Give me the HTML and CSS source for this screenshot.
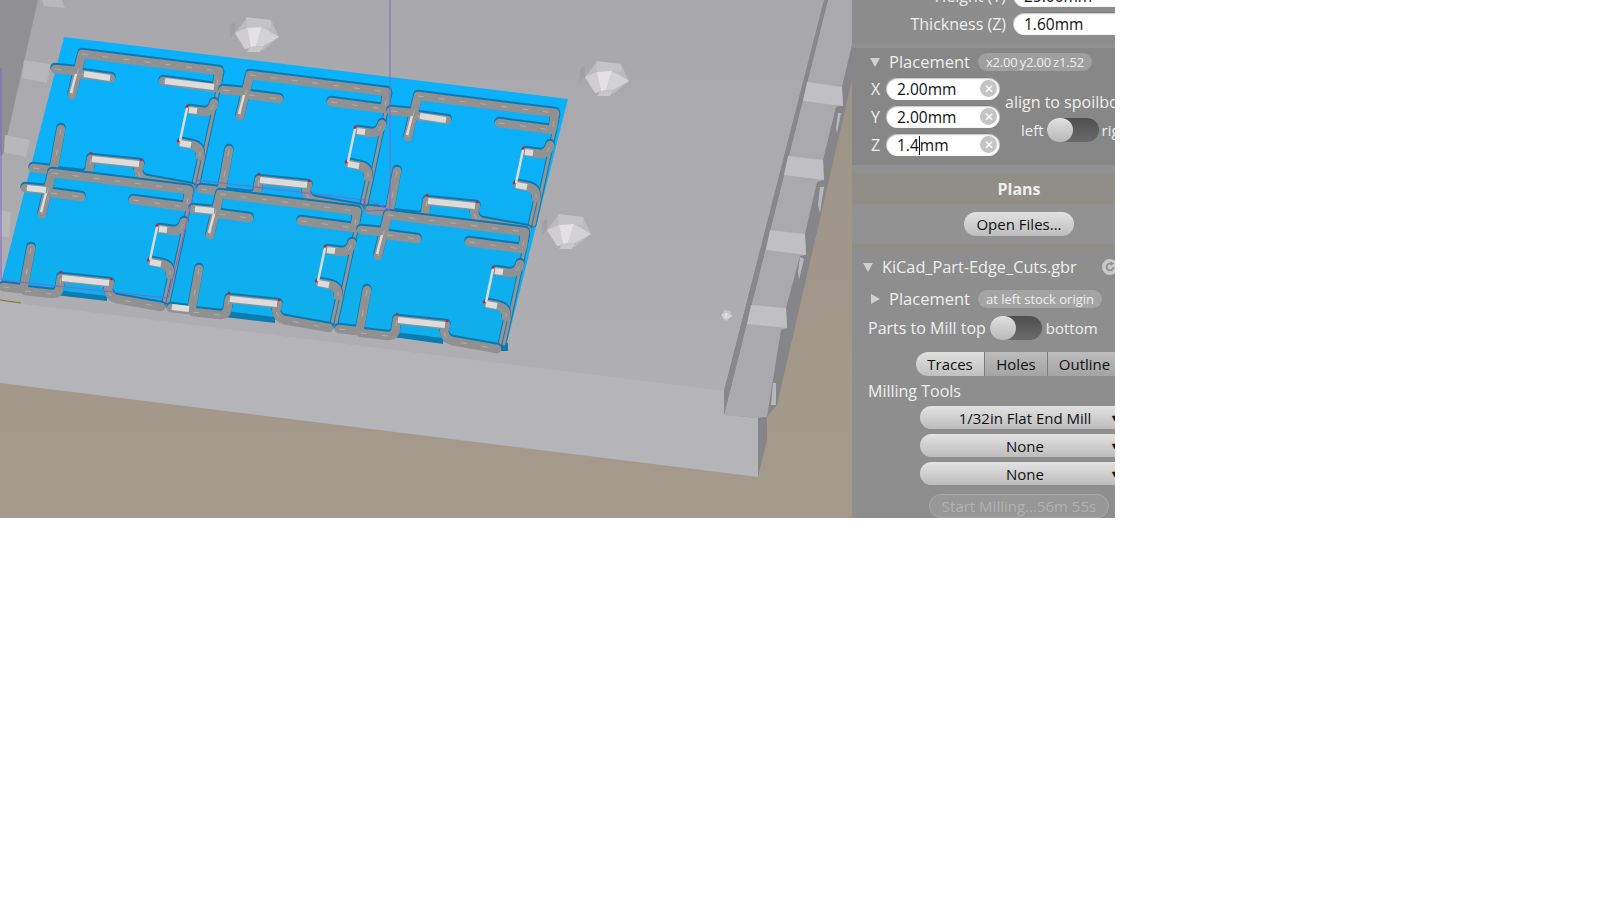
FILE: index.html
```html
<!DOCTYPE html>
<html lang="en">
  <head>
    <meta charset="UTF-8" />
    <title>Bantam Tools Milling Machine</title>
    <link rel="stylesheet" href="styles.css">
  </head>
  <body>
    <div class="app">
      <svg class="scene" viewBox="0 0 852 518" width="852" height="518">
        <defs>
          <linearGradient id="ground" x1="0" y1="0" x2="0" y2="1">
            <stop offset="0" stop-color="#9b9388" />
            <stop offset="1" stop-color="#a59b8c" />
          </linearGradient>
          <linearGradient id="bed" x1="0" y1="0" x2="0" y2="1">
            <stop offset="0" stop-color="#a8a7ab" />
            <stop offset="1" stop-color="#b0afb4" />
          </linearGradient>
          <linearGradient id="copper" x1="0" y1="0" x2="0" y2="1">
            <stop offset="0" stop-color="#09b2ff" />
            <stop offset="1" stop-color="#10aeea" />
          </linearGradient>

          <g id="cone">
            <polygon class="cone-side" points="0,8 5,5 5,16 0,21" />
            <polygon class="cone-base" points="5,16 16,2 41,3 49,20 33,33 15,32" />
            <polygon class="cone-top" points="16,0 41,3 41,11 32,10 17,11" />
            <polygon class="cone-left" points="5,16 17,11 21,30 15,32" />
            <polygon class="cone-mid" points="17,11 32,10 26,29 21,30" />
            <polygon class="cone-right" points="32,10 49,20 33,29 26,29" />
            <polygon class="cone-low" points="21,30 33,29 30,35 17,35" />
          </g>

          <g id="wide-cuts">
            <path d="M72 95 L82 54 L219 71 L217 85" />
            <path d="M55 69 L76 71" />
            <path d="M81 74 L111 78" />
            <path d="M163 81 L216 88" />
            <path d="M190 110 L204 112 Q212 112 214 103" />
            <path d="M182 143 L192 145 Q201 147 200 156" />
            <path d="M61 129 L54 167" />
            <path d="M33 168 L50 170" />
            <path d="M55 172 L82 175 Q90 175 90 165 L91 159 L140 164 L138 170 Q139 178 146 180 L191 188" />
          </g>
          <g id="thin-cuts">
            <path d="M222 72 L198 183" />
            <path d="M200 156 L194 183" />
          </g>
          <g id="bright-cuts">
            <path class="bright-wide" d="M92 159 L139 164" />
            <path class="bright-wide" d="M180 143 L191 145" />
            <path class="bright-wide" d="M189 110 L197 111" />
            <path class="bright-thin" d="M187 108 L180 141" />
            <path class="bright-thin" d="M76 74 L71 93" />
          </g>

          <g id="tile">
            <use href="#thin-cuts" class="thin-edge" />
            <use href="#thin-cuts" class="thin-cut" />
            <use href="#wide-cuts" class="cut-edge" transform="translate(0 -1.5)" />
            <use href="#wide-cuts" class="cut" />
            <use href="#wide-cuts" class="cut-fleck" />
            <use href="#bright-cuts" />
            <circle class="tack" cx="91" cy="153" r="1.3" />
            <circle class="tack" cx="141" cy="160" r="1.3" />
            <circle class="tack" cx="187" cy="106" r="1.3" />
            <circle class="tack" cx="178" cy="141" r="1.3" />
          </g>
        </defs>

        <rect width="852" height="518" fill="url(#ground)" />

        <!-- machine bed -->
        <polygon class="bed-shadow" points="0,0 38,0 3,155 0,155" />
        <polygon fill="url(#bed)" points="38,0 824,0 724,391 724,415 0,301 0,155 3,155" />
        <polygon class="bed-front" points="0,301 724,391 724,415 758,418 758,477 0,383" />
        <polygon class="bed-step" points="724,415 828,0 852,0 852,45 767,417 758,418" />
        <polygon class="bed-groove" points="724,391 824,0 828,0 724,415" />
        <polygon class="bed-dark" points="852,45 842,87 843,106 836,107 823,160 824,180 817,182 805,234 806,255 800,256 786,308 787,328 781,330 767,417 758,418 758,477 767,440 767,417 777,405 852,80" />
        <polygon class="tooth" points="807,82 842,87 843,106 803,101" />
        <polygon class="tooth" points="788,156 823,160 824,180 784,175" />
        <polygon class="tooth" points="770,230 805,234 806,255 766,250" />
        <polygon class="tooth" points="751,305 786,308 787,328 747,324" />
        <polygon class="tooth-soft" points="838,113 841,113 837,133 836,128" />
        <polygon class="tooth-soft" points="820,187 824,187 820,213 818,205" />
        <polygon class="tooth-soft" points="800,257 804,259 799,280 798,272" />
        <polygon class="tooth-soft" points="773,383 776,383 776,405 771,405" />
        <polygon class="tooth-soft" points="42,0 62,0 65,8 44,6" />
        <polygon class="tooth-soft" points="24,60 50,64 47,83 22,78" />
        <polygon class="tooth-soft" points="5,135 30,140 26,157 4,152" />
        <polygon class="tooth-soft" points="0,210 11,212 9,237 0,236" />

        <use href="#cone" transform="translate(230 17)" />
        <use href="#cone" transform="translate(580 61)" />
        <use href="#cone" transform="translate(542 214)" />
        <use href="#cone" transform="translate(720 310) scale(0.25 0.3)" />

        <!-- stock with the milled parts -->
        <polygon fill="url(#copper)" points="64,37 568,99 505,350 1,283" />
        <rect class="board-edge" x="501" y="343" width="7" height="8" />
        <polygon class="board-edge" points="57,290 107,296 107,301 55,295" />
        <polygon class="board-edge" points="226,311 275,317 275,323 224,317" />
        <polygon class="board-edge" points="395,332 443,338 443,344 393,337" />

        <use href="#tile" />
        <use href="#tile" transform="translate(168 21)" />
        <use href="#tile" transform="translate(336 42)" />
        <use href="#tile" transform="translate(-30 119)" />
        <use href="#tile" transform="translate(138 140)" />
        <use href="#tile" transform="translate(306 161)" />

        <!-- tabs that were milled through on some parts only -->
        <path class="bright-wide" d="M84 74 L110 78" />
        <path class="bright-wide" d="M165 81 L214 87" />
        <path class="bright-wide" d="M420 116 L446 120" />
        <path class="bright-wide" d="M27 188 L46 190" />
        <path class="bright-wide" d="M195 209 L214 211" />
        <path class="bright-wide" d="M172 307 L189 309" />

        <!-- tool path -->
        <path class="tool-path" d="M1 68 V280 L168 298 L197 180 L365 200 L366 211 L390 210 V0 M369 200 L390 210" />
        <path class="axis" d="M0 300 L21 303" />
      </svg>

      <div class="panel">
        <div class="group">
          <div class="section stock">
            <div class="size-row">
              <span class="size-label">Height (Y)</span>
              <span class="field size-field">25.00mm</span>
            </div>
            <div class="size-row">
              <span class="size-label">Thickness (Z)</span>
              <span class="field size-field">1.60mm</span>
            </div>
          </div>
          <div class="section placement">
            <div class="disclosure">
              <span class="tri tri-down"></span>
              <span>Placement</span>
              <span class="badge badge-tight">x2.00 y2.00 z1.52</span>
            </div>
            <div class="placement-body">
              <div class="axes">
                <div class="axis-row">
                  <span class="axis-label">X</span>
                  <span class="field axis-field"><span>2.00mm</span><span class="clear">✕</span></span>
                </div>
                <div class="axis-row">
                  <span class="axis-label">Y</span>
                  <span class="field axis-field"><span>2.00mm</span><span class="clear">✕</span></span>
                </div>
                <div class="axis-row">
                  <span class="axis-label">Z</span>
                  <span class="field axis-field"><span>1.4<span class="caret"></span>mm</span><span class="clear">✕</span></span>
                </div>
              </div>
              <div class="align">
                <div class="align-title">align to spoilboard</div>
                <div class="switch-row align-switch">
                  <span>left</span>
                  <span class="switch"><span class="knob"></span></span>
                  <span>right</span>
                </div>
              </div>
            </div>
          </div>
        </div>

        <h2 class="plans-title">Plans</h2>
        <div class="section open-files">
          <button class="btn">Open Files...</button>
        </div>

        <div class="section plan">
          <div class="plan-head">
            <span class="tri tri-down"></span>
            <span>KiCad_Part-Edge_Cuts.gbr</span>
            <svg class="reload" viewBox="0 0 16 16" width="16" height="16">
              <circle cx="8" cy="8" r="8" fill="#c9c9c9" />
              <path d="M11.5 8 A3.5 3.5 0 1 1 9.5 4.8" fill="none" stroke="#8e8e8e" stroke-width="1.8" />
              <path d="M8.5 2.6 L12 4.6 L8.6 7 Z" fill="#8e8e8e" />
            </svg>
          </div>
          <div class="disclosure plan-placement">
            <span class="tri tri-right"></span>
            <span>Placement</span>
            <span class="badge">at left stock origin</span>
          </div>
          <div class="switch-row parts-row">
            <span class="parts-label">Parts to Mill top</span>
            <span class="switch"><span class="knob"></span></span>
            <span>bottom</span>
          </div>
          <div class="tabs">
            <button class="tab tab-on">Traces</button>
            <button class="tab">Holes</button>
            <button class="tab">Outline</button>
          </div>
          <div class="tools-title">Milling Tools</div>
          <div class="tools">
            <div class="tool"><span class="tool-name">1/32in Flat End Mill</span><span class="tool-arrow">▼</span></div>
            <div class="tool"><span class="tool-name">None</span><span class="tool-arrow">▼</span></div>
            <div class="tool"><span class="tool-name">None</span><span class="tool-arrow">▼</span></div>
          </div>
          <button class="btn start">Start Milling...56m 55s</button>
        </div>
      </div>
    </div>
  </body>
</html>
```

FILE: styles.css
```css
body {
  margin: 0;
  background-color: white;
  font-family: "Open Sans", sans-serif;
  font-size: 16px;
}

.app {
  display: flex;
  width: 1115px;
  height: 518px;
  overflow: hidden;
}

.scene {
  display: block;
  flex-shrink: 0;
}

/* scene colours */
.bed-shadow { fill: #909092; }
.bed-front { fill: #b5b4b9; }
.bed-step { fill: #aaa9ad; }
.bed-groove { fill: #88878c; }
.bed-dark { fill: #86858a; }
.tooth { fill: #c0bfc3; }
.tooth-soft { fill: #b8b7bb; }

.cone-side { fill: #a1a1a4; }
.cone-base { fill: #bcbbbf; }
.cone-top { fill: #c4c3c7; }
.cone-left { fill: #d0ced1; }
.cone-mid { fill: #e3e1e3; }
.cone-right { fill: #d2d1d4; }
.cone-low { fill: #c8c7cb; }

.board-edge { fill: #0a7cb0; }

.cut,
.cut-edge,
.cut-fleck,
.thin-cut,
.thin-edge {
  fill: none;
  stroke-linecap: round;
  stroke-linejoin: round;
}

.cut { stroke: #919192; stroke-width: 8.5; }
.cut-edge { stroke: #0a79b2; stroke-width: 9.5; }
.cut-fleck { stroke: #aeaeaf; stroke-width: 1; stroke-dasharray: 6 15; stroke-linecap: butt; }
.thin-cut { stroke: #939394; stroke-width: 3; }
.thin-edge { stroke: #0a79b2; stroke-width: 5; }

.bright-wide,
.bright-thin {
  fill: none;
  stroke: #dcdcdc;
}

.bright-wide { stroke-width: 6; }
.bright-thin { stroke-width: 2.5; }

.tack { fill: #f01020; }

.tool-path {
  fill: none;
  stroke: #7d68c8;
  stroke-width: 1;
}

.axis {
  fill: none;
  stroke: #77781f;
  stroke-width: 1;
}

/* side panel */
.panel {
  display: flex;
  flex-direction: column;
  flex-shrink: 0;
  width: 334px;
  margin-top: -21px;
  color: #eeeeee;
  background-color: #918d87;
}

.group {
  padding-bottom: 9px;
  background-color: #919191;
  border-radius: 0 0 8px 8px;
}

.section {
  background-color: #929292;
}

.stock {
  display: flex;
  flex-direction: column;
  gap: 5px;
  padding: 5px 0 9px;
  margin-bottom: 4px;
  background-color: #8d8d8e;
}

.size-row {
  display: flex;
  justify-content: flex-end;
  align-items: center;
  gap: 7px;
  height: 23px;
  padding-right: 13px;
}

.field {
  box-sizing: border-box;
  display: flex;
  align-items: center;
  height: 23px;
  padding-left: 11px;
  font-size: 15.5px;
  color: #111;
  background-color: white;
  border-radius: 12px;
  box-shadow: inset 0 1px 2px #555;
}

.size-field {
  width: 160px;
}

.placement {
  padding: 2px 0 9px 18px;
  background-color: #878787;
}

.disclosure {
  display: flex;
  align-items: center;
  height: 24px;
  line-height: 24px;
  margin-bottom: 3px;
  font-size: 16.5px;
}

.tri {
  width: 0;
  height: 0;
  margin-right: 9px;
}

.tri-down {
  border-left: 5px solid transparent;
  border-right: 5px solid transparent;
  border-top: 9px solid #cfcfcf;
}

.tri-right {
  border-top: 5px solid transparent;
  border-bottom: 5px solid transparent;
  border-left: 9px solid #cfcfcf;
}

.badge {
  margin-left: 8px;
  padding: 0 8px;
  height: 18px;
  line-height: 18px;
  font-size: 13px;
  background-color: rgba(255, 255, 255, 0.2);
  border-radius: 9px;
  white-space: nowrap;
}

.badge-tight {
  word-spacing: -1px;
  letter-spacing: -0.2px;
}

.placement-body {
  display: flex;
  gap: 5px;
}

.axes {
  display: flex;
  flex-direction: column;
  gap: 5px;
}

.axis-row {
  display: flex;
  align-items: center;
}

.axis-label {
  box-sizing: border-box;
  width: 16px;
  padding-left: 1px;
}

.axis-field {
  justify-content: space-between;
  width: 114px;
  padding-right: 3px;
}

.clear {
  width: 17px;
  height: 17px;
  line-height: 17px;
  font-size: 12px;
  text-align: center;
  color: white;
  background-color: #c4c4c4;
  border-radius: 50%;
}

.caret {
  display: inline-block;
  width: 1px;
  height: 19px;
  margin-bottom: -4px;
  background-color: #111;
}

.align {
  padding-top: 14px;
  white-space: nowrap;
}

.align-title {
  line-height: 22px;
}

.switch-row {
  display: flex;
  align-items: center;
  gap: 4px;
  height: 24px;
  margin: 5px 0 0 16px;
  font-size: 15px;
  white-space: nowrap;
}

.align-switch {
  gap: 3px;
}

.parts-label {
  font-size: 16px;
}

.switch {
  display: block;
  flex-shrink: 0;
  width: 52px;
  height: 24px;
  background: linear-gradient(#4f4f4f, #6a6a6a);
  border-radius: 12px;
}

.knob {
  display: block;
  width: 26px;
  height: 24px;
  background: linear-gradient(#e0e0e0, #b8b8b8);
  border-radius: 12px;
}

.plans-title {
  margin: 0;
  height: 30px;
  line-height: 30px;
  font-size: 16px;
  font-weight: 700;
  text-align: center;
}

.btn {
  display: block;
  height: 24px;
  padding: 0 12px;
  font-family: inherit;
  font-size: 15px;
  line-height: 22px;
  color: #111;
  background: linear-gradient(#e2e2e2, #bdbdbd);
  border: none;
  border-radius: 12px;
}

.open-files {
  display: flex;
  justify-content: center;
  padding: 8px 0;
  margin-bottom: 4px;
  border-radius: 8px;
}

.plan {
  flex: 1;
  padding-top: 7px;
  background-color: #8e8e8e;
  border-radius: 8px 8px 0 0;
}

.plan-head {
  display: flex;
  align-items: center;
  height: 24px;
  padding-left: 11px;
  font-size: 16.3px;
}

.plan-head .tri {
  margin-right: 9px;
}

.reload {
  margin-left: auto;
  margin-right: 68px;
}

.plan-placement {
  margin: 8px 0 5px 19px;
}

.parts-row {
  margin: 0 0 0 16px;
}

.tabs {
  display: flex;
  height: 24px;
  margin: 12px 0 0 64px;
}

.tab {
  padding: 0;
  width: 63px;
  font-family: inherit;
  font-size: 15px;
  color: #111;
  background: linear-gradient(#bcbcbc, #a4a4a4);
  border: none;
  border-left: 1px solid #7c7c7c;
}

.tab:last-child {
  width: 90px;
  padding-right: 16px;
  border-radius: 0 12px 12px 0;
}

.tab-on {
  width: 68px;
  background: linear-gradient(#e0e0e0, #c0c0c0);
  border-left: none;
  border-radius: 12px 0 0 12px;
}

.tools-title {
  margin: 4px 0 4px 16px;
  line-height: 22px;
}

.tools {
  display: flex;
  flex-direction: column;
  gap: 5px;
  margin-left: 68px;
}

.tool {
  display: flex;
  align-items: center;
  width: 210px;
  height: 23px;
  font-size: 15px;
  color: #111;
  background: linear-gradient(#e2e2e2, #bdbdbd);
  border-radius: 12px;
}

.tool-name {
  flex: 1;
  padding-left: 20px;
  text-align: center;
}

.tool-arrow {
  width: 20px;
  font-size: 9px;
}

.start {
  margin: 9px 0 0 77px;
  width: 180px;
  padding: 0;
  color: #b2b2b2;
  background: #979797;
  border: 1px solid #a8a8a8;
}
```
